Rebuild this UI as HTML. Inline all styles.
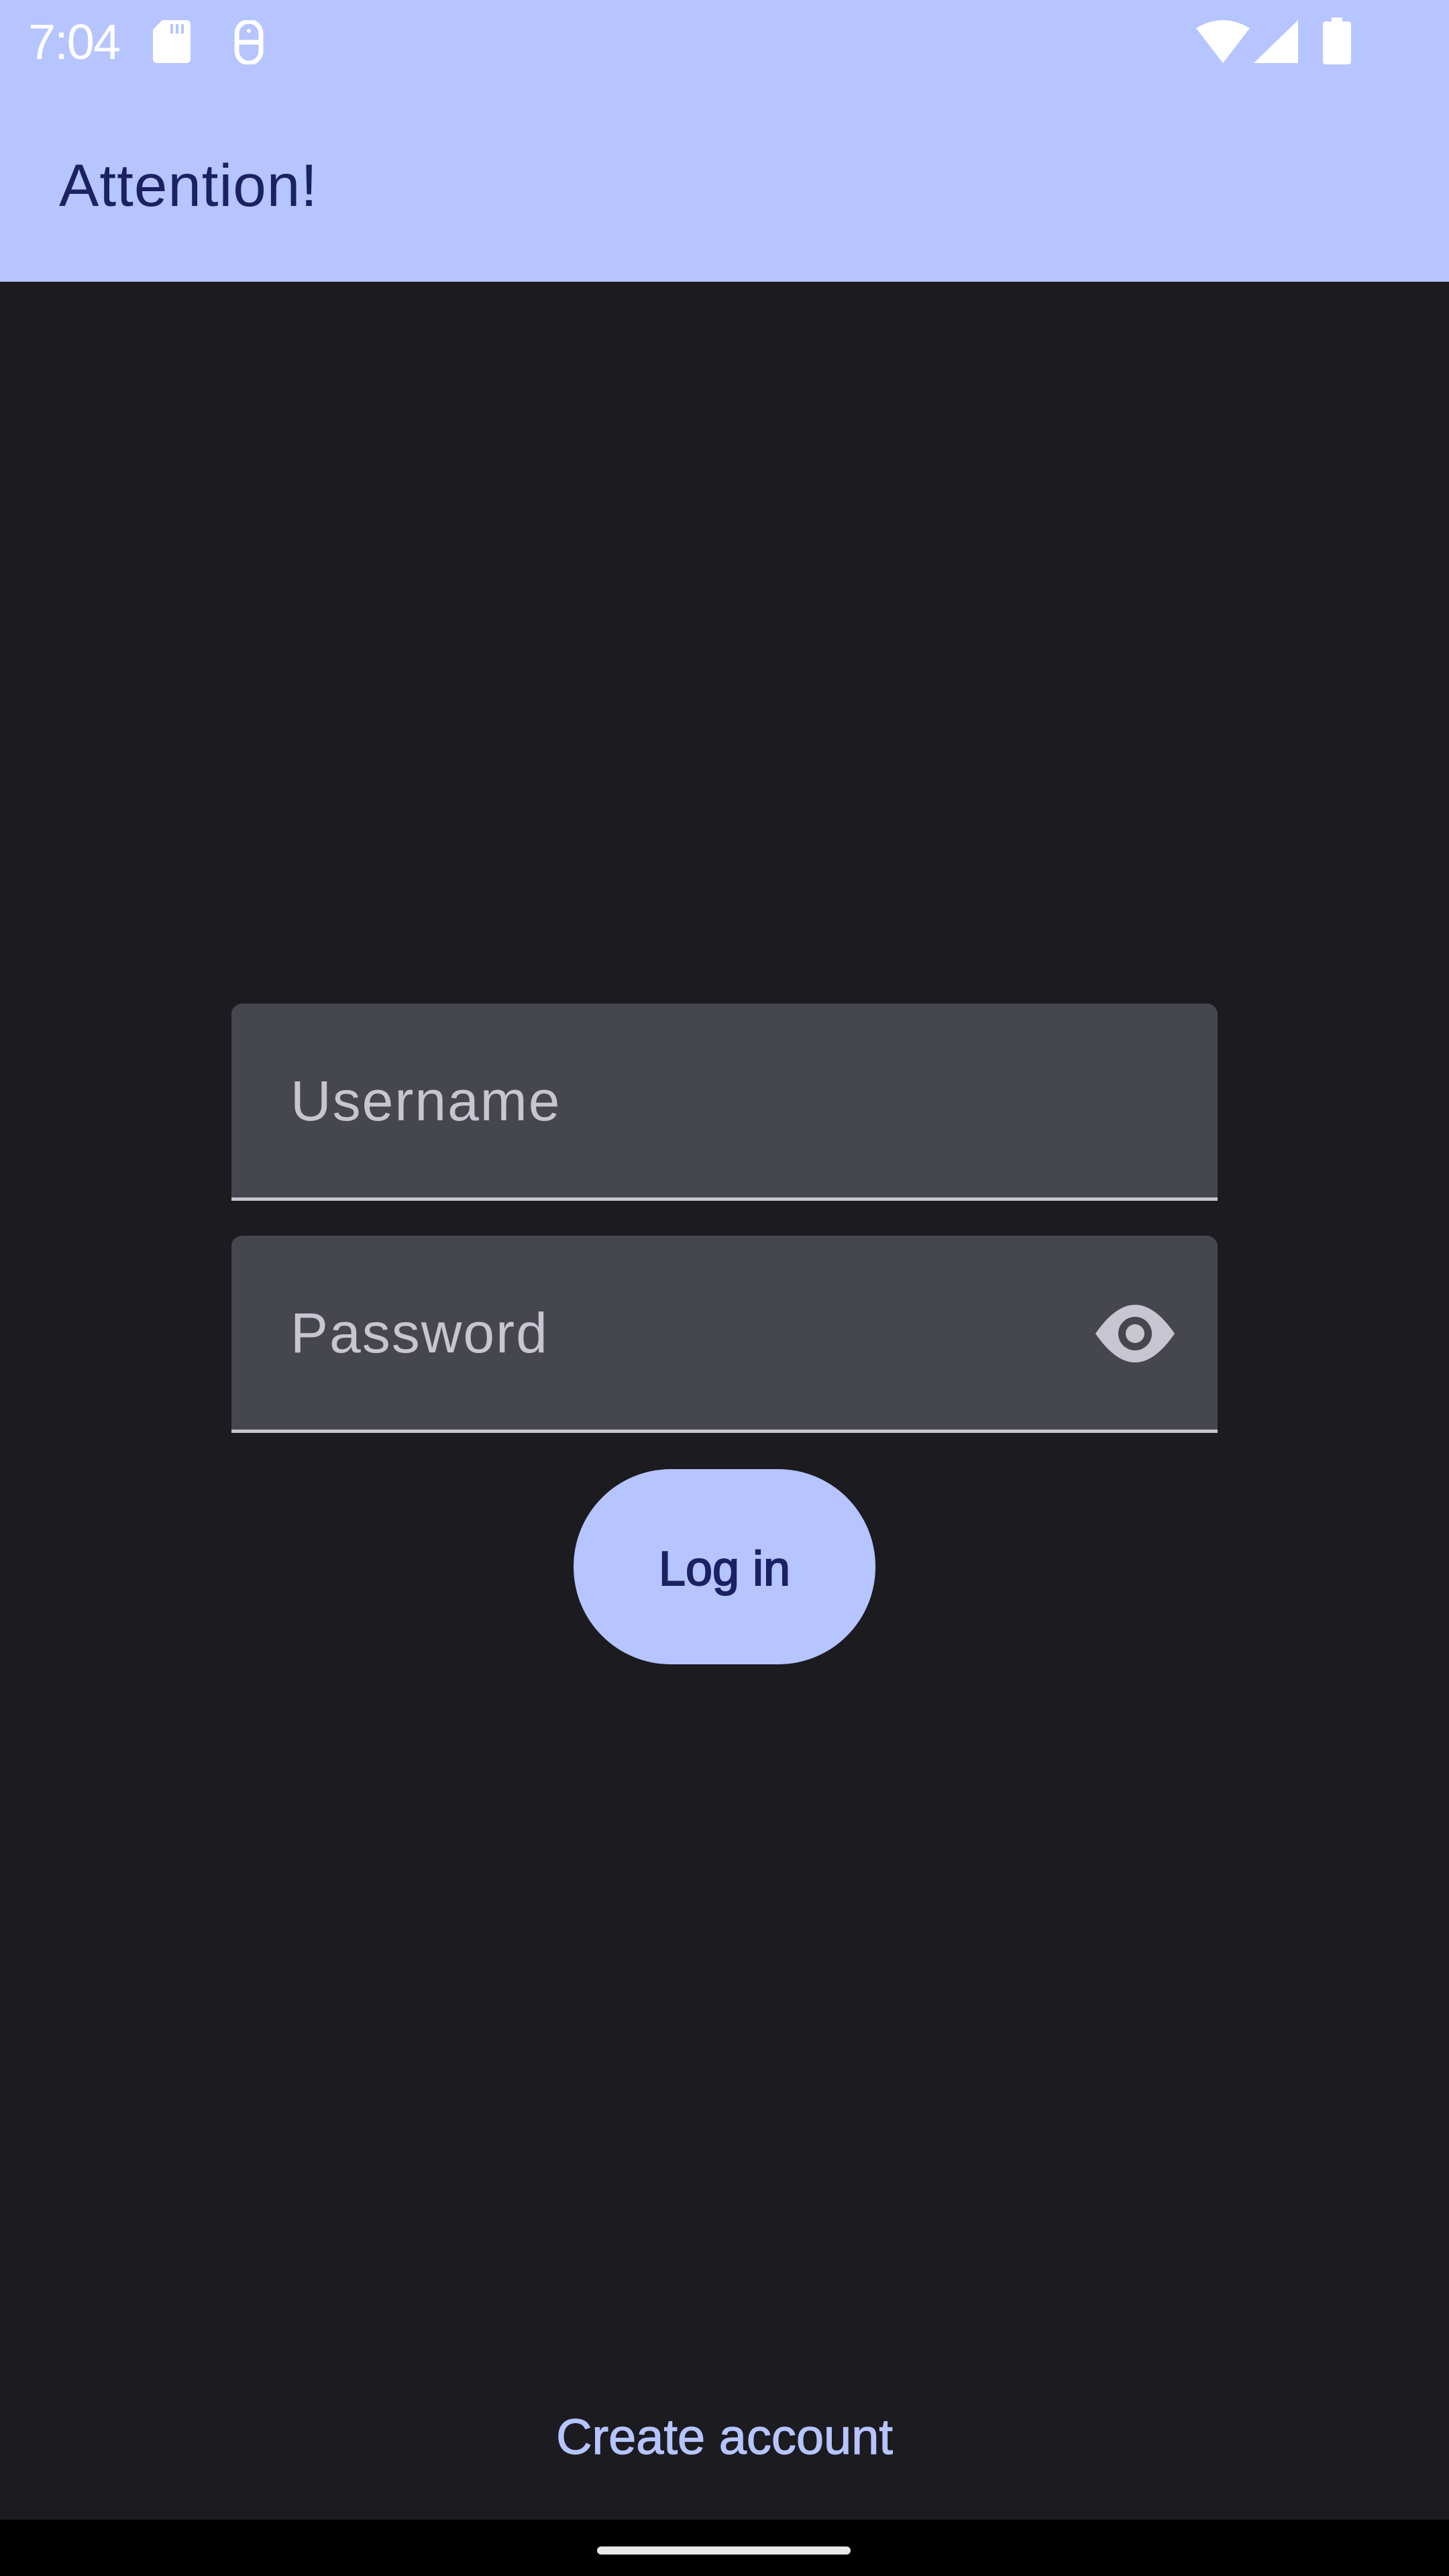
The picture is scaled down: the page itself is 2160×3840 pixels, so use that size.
<!DOCTYPE html>
<html><head><meta charset="utf-8"><style>
html,body{margin:0;padding:0}
body{width:2160px;height:3840px;background:#1b1b20;position:relative;overflow:hidden;font-family:"Liberation Sans",sans-serif}
.top{position:absolute;left:0;top:0;width:2160px;height:420px;background:#b6c4ff}
.abs{position:absolute}
.field{position:absolute;left:345px;width:1470px;height:289px;background:#46464f;border-radius:16px 16px 0 0;border-bottom:5px solid #c6c5d0}
.lbl{position:absolute;left:88px;font-size:84px;color:#c6c5d0;letter-spacing:2px;line-height:1}
</style></head><body>
<div class="top"></div>
<div class="abs" style="left:42px;top:26px;font-size:74px;color:#fff;line-height:1;letter-spacing:-2px">7:04</div>
<svg class="abs" style="left:228px;top:30px" width="56" height="64" viewBox="0 0 56 64"><path d="M14 0H50a6 6 0 0 1 6 6V58a6 6 0 0 1-6 6H6a6 6 0 0 1-6-6V14Z" fill="#fff"/><rect x="26" y="6" width="4" height="14" fill="#b6c4ff"/><rect x="34" y="6" width="4" height="14" fill="#b6c4ff"/><rect x="42" y="6" width="4" height="14" fill="#b6c4ff"/></svg>
<svg class="abs" style="left:343px;top:30px" width="56" height="66" viewBox="0 0 56 66"><path d="M10 20a18 18 0 0 1 36 0M10 46a18 18 0 0 0 36 0M10 20v26M46 20v26M8 33h40" stroke="#fff" stroke-width="7" fill="none"/><circle cx="28" cy="16" r="3" fill="#fff"/></svg>
<svg class="abs" style="left:1783px;top:30px" width="80" height="64" viewBox="0 0 80 64"><path d="M0 12Q40-12 80 12L40 64Z" fill="#fff"/></svg>
<svg class="abs" style="left:1869px;top:30px" width="66" height="64" viewBox="0 0 66 64"><path d="M66 0V64H0Z" fill="#fff"/></svg>
<svg class="abs" style="left:1972px;top:26px" width="42" height="70" viewBox="0 0 42 70"><rect x="13" y="0" width="16" height="8" fill="#fff"/><rect x="0" y="6" width="42" height="64" rx="4" fill="#fff"/></svg>
<div class="abs" style="left:88px;top:232px;font-size:89px;color:#1b2163;line-height:1;letter-spacing:1px">Attention!</div>
<div class="field" style="top:1496px"><div class="lbl" style="top:103px">Username</div></div>
<div class="field" style="top:1842px"><div class="lbl" style="top:103px">Password</div>
<svg class="abs" style="left:1288px;top:103px" width="118" height="86" viewBox="0 0 118 86"><path d="M0 43Q59-43 118 43Q59 129 0 43Z" fill="#c6c5d0"/><circle cx="59" cy="43" r="25" fill="#46464f"/><circle cx="59" cy="43" r="14" fill="#c6c5d0"/></svg>
</div>
<div class="abs" style="left:855px;top:2190px;width:450px;height:291px;border-radius:145px;background:#b6c4ff;color:#1b2163;font-size:72px;-webkit-text-stroke:2px #1b2163;text-align:center;line-height:299px">Log in</div>
<div class="abs" style="left:0;width:2160px;top:3596px;text-align:center;font-size:74px;color:#b6c4ff;-webkit-text-stroke:1.2px #b6c4ff;line-height:1">Create account</div>
<div class="abs" style="left:0;top:3756px;width:2160px;height:84px;background:#000"></div>
<div class="abs" style="left:890px;top:3796px;width:378px;height:12px;border-radius:6px;background:#e8e8e8"></div>
</body></html>
